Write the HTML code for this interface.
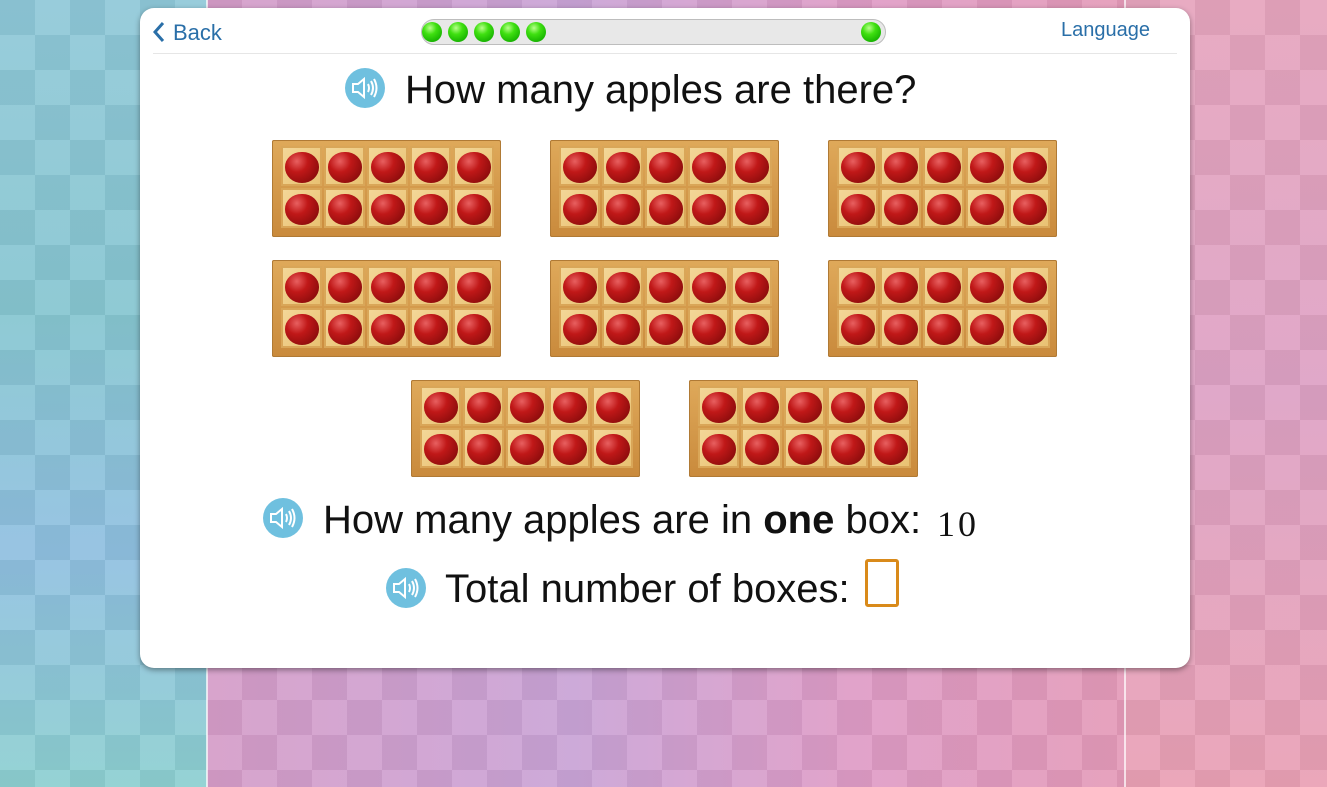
<!DOCTYPE html>
<html><head><meta charset="utf-8"><style>
*{margin:0;padding:0;box-sizing:border-box}
body{width:1327px;height:787px;overflow:hidden;position:relative;font-family:"Liberation Sans",sans-serif;
background:#c9a0c8}
.bg{position:absolute;top:0;height:787px}
.bg::after{content:"";position:absolute;inset:0;
background:repeating-conic-gradient(rgba(255,255,255,.08) 0 25%,rgba(0,0,0,.04) 0 50%) 0 0/70px 70px}
.bl{left:0;width:207px;background:linear-gradient(180deg,#8fc8d8,#86c6d0 40%,#8fbfe0 70%,#8ccfd0)}
.bm{left:207px;width:918px;background:linear-gradient(90deg,#d59cc8,#c9a3d6 40%,#de9bc6 70%,#e49ab8)}
.br{left:1125px;width:202px;background:linear-gradient(180deg,#e6a4bd,#dda1c4 50%,#e9a0b4)}
.vl{position:absolute;top:0;height:787px;width:2px;background:rgba(255,255,255,.7)}
.card{position:absolute;left:140px;top:8px;width:1050px;height:660px;background:#fff;border-radius:14px;box-shadow:0 2px 6px rgba(0,0,0,.4)}
.back{position:absolute;left:13px;top:12px;color:#2a6fa8;font-size:22px}
.back svg{vertical-align:-3px;margin-right:8px}
.lang{position:absolute;right:40px;top:11px;color:#2a6fa8;font-size:20px}
.hr{position:absolute;left:13px;right:13px;top:45px;border-top:1px solid #e6e6e6}
.prog{position:absolute;left:281px;top:11px;width:465px;height:26px;border-radius:13px;background:#e8e8e8;border:1px solid #bdbdbd}
.dot{position:absolute;top:2px;width:20px;height:20px;border-radius:50%;background:radial-gradient(circle at 40% 30%,#b8ff8c 0,#3fe010 35%,#14b000 80%)}
.spk{position:absolute;width:40px;height:40px;border-radius:50%;background:#6fc0df}
.spk svg{position:absolute;left:6px;top:9px}
.t{position:absolute;font-size:40px;color:#111;white-space:nowrap}
.box{position:absolute;width:229px;height:97px;background:linear-gradient(#dfa95a,#c98a3c);border-radius:2px;box-shadow:inset 0 0 0 1px #b07a35}
.cell{position:absolute;width:41px;height:40px;background:linear-gradient(135deg,#f4d89a,#e8c070);box-shadow:inset 0 0 0 2px #d9a658}
.ap{position:absolute;left:4px;top:6px;width:34px;height:31px;border-radius:48% 48% 50% 50%;background:radial-gradient(circle at 35% 30%,#e86060 0,#c01818 35%,#7a0808 95%)}
</style></head><body>
<div class="bg bl"></div><div class="bg bm"></div><div class="bg br"></div>
<div class="vl" style="left:206px"></div><div class="vl" style="left:1124px"></div>
<div class="card">
<div class="back"><svg width="12" height="22" viewBox="0 0 12 22"><path d="M10 2 L2 11 L10 20" stroke="#2a6fa8" stroke-width="3" fill="none"/></svg>Back</div>
<div class="prog">
<div class="dot" style="left:0px"></div><div class="dot" style="left:26px"></div><div class="dot" style="left:52px"></div><div class="dot" style="left:78px"></div><div class="dot" style="left:104px"></div><div class="dot" style="left:439px"></div>
</div>
<div class="lang">Language</div>
<div class="hr"></div>
</div>
<div class="spk" style="left:345px;top:68px"><svg width="28" height="22" viewBox="0 0 28 22"><path d="M2 7h5l6-5v18l-6-5H2z" fill="none" stroke="#fff" stroke-width="2"/><path d="M17 7q2 4 0 8M20 4q4 7 0 14M23 2q5 9 0 18" stroke="#fff" stroke-width="2" fill="none"/></svg></div>
<div class="t" style="left:405px;top:68px">How many apples are there?</div>

<div class="spk" style="left:263px;top:498px"><svg width="28" height="22" viewBox="0 0 28 22"><path d="M2 7h5l6-5v18l-6-5H2z" fill="none" stroke="#fff" stroke-width="2"/><path d="M17 7q2 4 0 8M20 4q4 7 0 14M23 2q5 9 0 18" stroke="#fff" stroke-width="2" fill="none"/></svg></div>
<div class="t" style="left:323px;top:498px">How many apples are in <b>one</b> box:</div>
<div class="t" style="left:937px;top:503px;font-family:'Liberation Serif',serif;font-size:36px;letter-spacing:3px">10</div>
<div class="spk" style="left:386px;top:568px"><svg width="28" height="22" viewBox="0 0 28 22"><path d="M2 7h5l6-5v18l-6-5H2z" fill="none" stroke="#fff" stroke-width="2"/><path d="M17 7q2 4 0 8M20 4q4 7 0 14M23 2q5 9 0 18" stroke="#fff" stroke-width="2" fill="none"/></svg></div>
<div class="t" style="left:445px;top:567px">Total number of boxes:</div>
<div style="position:absolute;left:865px;top:559px;width:34px;height:48px;border:3px solid #d98a1a;border-radius:3px"></div>

<div class="box" style="left:272px;top:140px"><div class="cell" style="left:9px;top:6px"><div class="ap"></div></div><div class="cell" style="left:52px;top:6px"><div class="ap"></div></div><div class="cell" style="left:95px;top:6px"><div class="ap"></div></div><div class="cell" style="left:138px;top:6px"><div class="ap"></div></div><div class="cell" style="left:181px;top:6px"><div class="ap"></div></div><div class="cell" style="left:9px;top:48px"><div class="ap"></div></div><div class="cell" style="left:52px;top:48px"><div class="ap"></div></div><div class="cell" style="left:95px;top:48px"><div class="ap"></div></div><div class="cell" style="left:138px;top:48px"><div class="ap"></div></div><div class="cell" style="left:181px;top:48px"><div class="ap"></div></div></div>
<div class="box" style="left:550px;top:140px"><div class="cell" style="left:9px;top:6px"><div class="ap"></div></div><div class="cell" style="left:52px;top:6px"><div class="ap"></div></div><div class="cell" style="left:95px;top:6px"><div class="ap"></div></div><div class="cell" style="left:138px;top:6px"><div class="ap"></div></div><div class="cell" style="left:181px;top:6px"><div class="ap"></div></div><div class="cell" style="left:9px;top:48px"><div class="ap"></div></div><div class="cell" style="left:52px;top:48px"><div class="ap"></div></div><div class="cell" style="left:95px;top:48px"><div class="ap"></div></div><div class="cell" style="left:138px;top:48px"><div class="ap"></div></div><div class="cell" style="left:181px;top:48px"><div class="ap"></div></div></div>
<div class="box" style="left:828px;top:140px"><div class="cell" style="left:9px;top:6px"><div class="ap"></div></div><div class="cell" style="left:52px;top:6px"><div class="ap"></div></div><div class="cell" style="left:95px;top:6px"><div class="ap"></div></div><div class="cell" style="left:138px;top:6px"><div class="ap"></div></div><div class="cell" style="left:181px;top:6px"><div class="ap"></div></div><div class="cell" style="left:9px;top:48px"><div class="ap"></div></div><div class="cell" style="left:52px;top:48px"><div class="ap"></div></div><div class="cell" style="left:95px;top:48px"><div class="ap"></div></div><div class="cell" style="left:138px;top:48px"><div class="ap"></div></div><div class="cell" style="left:181px;top:48px"><div class="ap"></div></div></div>
<div class="box" style="left:272px;top:260px"><div class="cell" style="left:9px;top:6px"><div class="ap"></div></div><div class="cell" style="left:52px;top:6px"><div class="ap"></div></div><div class="cell" style="left:95px;top:6px"><div class="ap"></div></div><div class="cell" style="left:138px;top:6px"><div class="ap"></div></div><div class="cell" style="left:181px;top:6px"><div class="ap"></div></div><div class="cell" style="left:9px;top:48px"><div class="ap"></div></div><div class="cell" style="left:52px;top:48px"><div class="ap"></div></div><div class="cell" style="left:95px;top:48px"><div class="ap"></div></div><div class="cell" style="left:138px;top:48px"><div class="ap"></div></div><div class="cell" style="left:181px;top:48px"><div class="ap"></div></div></div>
<div class="box" style="left:550px;top:260px"><div class="cell" style="left:9px;top:6px"><div class="ap"></div></div><div class="cell" style="left:52px;top:6px"><div class="ap"></div></div><div class="cell" style="left:95px;top:6px"><div class="ap"></div></div><div class="cell" style="left:138px;top:6px"><div class="ap"></div></div><div class="cell" style="left:181px;top:6px"><div class="ap"></div></div><div class="cell" style="left:9px;top:48px"><div class="ap"></div></div><div class="cell" style="left:52px;top:48px"><div class="ap"></div></div><div class="cell" style="left:95px;top:48px"><div class="ap"></div></div><div class="cell" style="left:138px;top:48px"><div class="ap"></div></div><div class="cell" style="left:181px;top:48px"><div class="ap"></div></div></div>
<div class="box" style="left:828px;top:260px"><div class="cell" style="left:9px;top:6px"><div class="ap"></div></div><div class="cell" style="left:52px;top:6px"><div class="ap"></div></div><div class="cell" style="left:95px;top:6px"><div class="ap"></div></div><div class="cell" style="left:138px;top:6px"><div class="ap"></div></div><div class="cell" style="left:181px;top:6px"><div class="ap"></div></div><div class="cell" style="left:9px;top:48px"><div class="ap"></div></div><div class="cell" style="left:52px;top:48px"><div class="ap"></div></div><div class="cell" style="left:95px;top:48px"><div class="ap"></div></div><div class="cell" style="left:138px;top:48px"><div class="ap"></div></div><div class="cell" style="left:181px;top:48px"><div class="ap"></div></div></div>
<div class="box" style="left:411px;top:380px"><div class="cell" style="left:9px;top:6px"><div class="ap"></div></div><div class="cell" style="left:52px;top:6px"><div class="ap"></div></div><div class="cell" style="left:95px;top:6px"><div class="ap"></div></div><div class="cell" style="left:138px;top:6px"><div class="ap"></div></div><div class="cell" style="left:181px;top:6px"><div class="ap"></div></div><div class="cell" style="left:9px;top:48px"><div class="ap"></div></div><div class="cell" style="left:52px;top:48px"><div class="ap"></div></div><div class="cell" style="left:95px;top:48px"><div class="ap"></div></div><div class="cell" style="left:138px;top:48px"><div class="ap"></div></div><div class="cell" style="left:181px;top:48px"><div class="ap"></div></div></div>
<div class="box" style="left:689px;top:380px"><div class="cell" style="left:9px;top:6px"><div class="ap"></div></div><div class="cell" style="left:52px;top:6px"><div class="ap"></div></div><div class="cell" style="left:95px;top:6px"><div class="ap"></div></div><div class="cell" style="left:138px;top:6px"><div class="ap"></div></div><div class="cell" style="left:181px;top:6px"><div class="ap"></div></div><div class="cell" style="left:9px;top:48px"><div class="ap"></div></div><div class="cell" style="left:52px;top:48px"><div class="ap"></div></div><div class="cell" style="left:95px;top:48px"><div class="ap"></div></div><div class="cell" style="left:138px;top:48px"><div class="ap"></div></div><div class="cell" style="left:181px;top:48px"><div class="ap"></div></div></div>
</body></html>
